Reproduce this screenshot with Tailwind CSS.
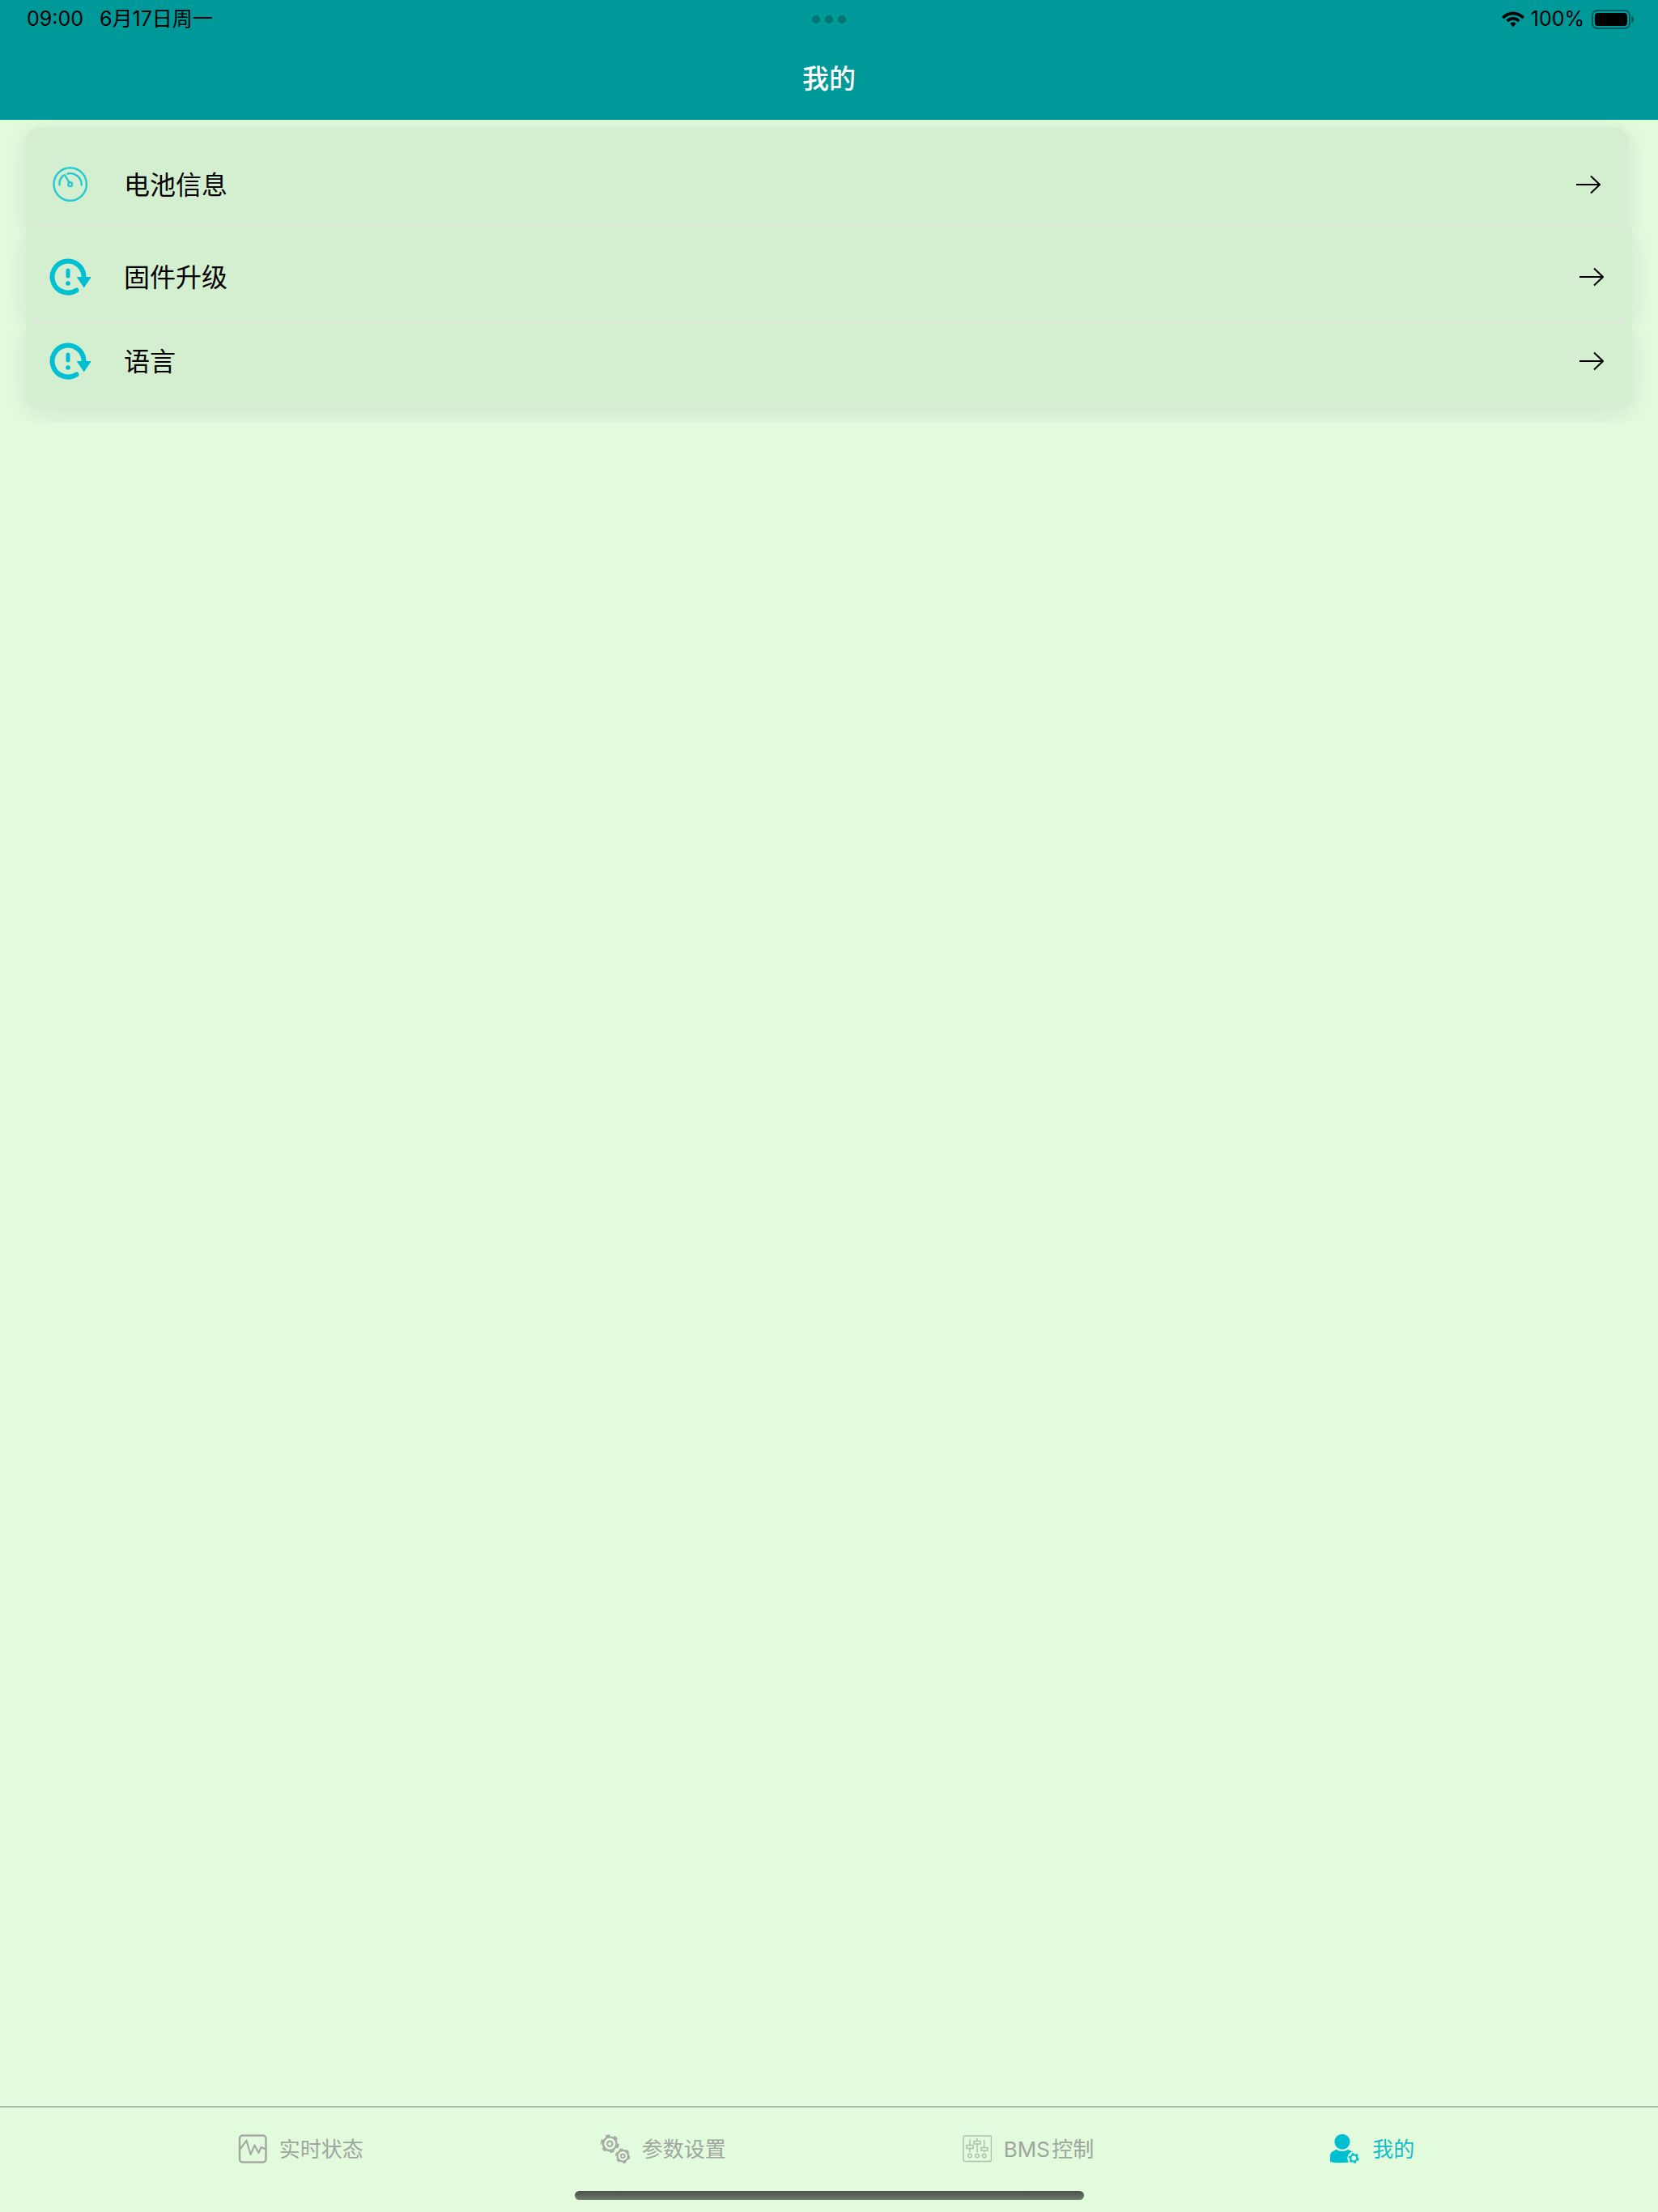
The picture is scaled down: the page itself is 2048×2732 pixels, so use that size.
<!DOCTYPE html>
<html lang="zh">
<head>
<meta charset="utf-8">
<title>我的</title>
<script src="https://cdn.jsdelivr.net/npm/@tailwindcss/browser@4"></script>
</head>
<body class="m-0">
<div class="w-[2048px] h-[2732px] flex flex-col overflow-hidden bg-[#e2fbdd] font-['Inter','Noto_Sans_CJK_SC',sans-serif]">
  <header class="h-[148px] bg-[#009999] flex flex-col shrink-0">
    <div class="h-[46px] flex items-center pl-[33px] pr-[30px] pt-[1px] text-[25px] leading-none text-black">
      <span>09:00</span>
      <span class="ml-[20px]">6月17日周一</span>
      <div class="flex-1 flex justify-center gap-[6px] pr-[70px]">
        <span class="w-[10px] h-[10px] rounded-full bg-black/25"></span>
        <span class="w-[10px] h-[10px] rounded-full bg-black/25"></span>
        <span class="w-[10px] h-[10px] rounded-full bg-black/25"></span>
      </div>
      <svg class="w-[28px] h-[20px]" viewBox="1.500 2.500 25 17" preserveAspectRatio="none"><path d="M14 3C9 3 5 5 1.500 8.300L3.700 10.500C6.500 7.800 10 6.300 14 6.300S21.500 7.800 24.300 10.500L26.500 8.300C23 5 19 3 14 3Z" fill="#000"/><path d="M14 8.500C11 8.500 8.300 9.700 6.300 11.600L8.500 13.800C10 12.500 11.900 11.700 14 11.700S18 12.500 19.500 13.800L21.700 11.600C19.700 9.700 17 8.500 14 8.500Z" fill="#000"/><path d="M14 14C12.800 14 11.600 14.500 10.800 15.200L14 19L17.200 15.200C16.400 14.500 15.200 14 14 14Z" fill="#000"/></svg>
      <span class="ml-[8px]">100%</span>
      <div class="ml-[9px] flex items-center">
        <div class="w-[48px] h-[24px] rounded-[7px] border-2 border-black/40 p-[2px]"><div class="w-full h-full rounded-[4px] bg-black"></div></div>
        <div class="ml-[1px] w-[3px] h-[8px] rounded-r-full bg-black/40"></div>
      </div>
    </div>
    <h1 class="flex-1 flex items-center justify-center text-[33px] font-medium text-white leading-none">我的</h1>
  </header>

  <main class="flex-1 flex flex-col font-['Noto_Sans_CJK_SC',sans-serif] text-[32px] text-black">
    <div class="h-[134px] overflow-hidden pt-[10px] pl-[32px] pr-[36px]">
      <div class="h-[134px] bg-[#d4efd0] rounded-t-[16px] shadow-[0_4px_30px_rgba(0,0,0,0.09)]">
        <div class="h-[118px] pt-[22px] flex items-center pl-[28px] pr-[35px]">
          <svg class="w-[52px] h-[50px]" viewBox="10 13 52 50" fill="none" stroke="#28c8d4"><circle cx="36.700" cy="37.500" r="20.200" stroke-width="2.400"/><path d="M23.500 38.500A13.500 13.500 0 0 1 28 27M33.500 24.500A14 14 0 0 1 50.700 38.500" stroke-width="2.400" stroke-linecap="round"/><path d="M30 26L35.500 35.500" stroke-width="2.400" stroke-linecap="round"/><circle cx="36.700" cy="37.700" r="2.500" stroke-width="2.200"/></svg>
          <span class="ml-[41px] flex-1 leading-none pb-[5px]">电池信息</span>
          <svg class="w-[30px] h-[24px]" viewBox="0 0 30 24" fill="none" stroke="#000" stroke-width="2"><path d="M0 12H29M18 1.500L29 12L18 22.500"/></svg>
        </div>
        <div class="h-[2px] mx-[8px] bg-[#e3e6df]"></div>
      </div>
    </div>
    <div class="h-[120px] overflow-hidden px-[32px]">
      <div class="h-[120px] bg-[#d4efd0] shadow-[0_4px_30px_rgba(0,0,0,0.09)]">
        <div class="h-[114px] pt-[6px] flex items-center pl-[28px] pr-[35px]">
          <svg class="w-[52px] h-[50px]" viewBox="10 12 52 50" fill="#00bfd3"><path d="M44.500 53.500A19.500 19.500 0 1 1 53.500 36" fill="none" stroke="#00bfd3" stroke-width="6" stroke-linecap="round"/><path d="M44.500 37H62.800L53.700 50.500Z"/><rect x="31.500" y="26.500" width="5" height="12" rx="2.500"/><circle cx="34" cy="45" r="2.800"/></svg>
          <span class="ml-[41px] flex-1 leading-none pb-[5px]">固件升级</span>
          <svg class="w-[30px] h-[24px]" viewBox="0 0 30 24" fill="none" stroke="#000" stroke-width="2"><path d="M0 12H29M18 1.500L29 12L18 22.500"/></svg>
        </div>
        <div class="h-[2px] ml-[8px] mr-[9px] bg-[#e3e6df]"></div>
      </div>
    </div>
    <div class="h-[120px] overflow-hidden px-[32px]">
      <div class="h-[104px] bg-[#d4efd0] rounded-b-[16px] shadow-[0_4px_30px_rgba(0,0,0,0.09)]">
        <div class="h-[88px] flex items-center pl-[28px] pr-[35px]">
          <svg class="w-[52px] h-[50px]" viewBox="10 12 52 50" fill="#00bfd3"><path d="M44.500 53.500A19.500 19.500 0 1 1 53.500 36" fill="none" stroke="#00bfd3" stroke-width="6" stroke-linecap="round"/><path d="M44.500 37H62.800L53.700 50.500Z"/><rect x="31.500" y="26.500" width="5" height="12" rx="2.500"/><circle cx="34" cy="45" r="2.800"/></svg>
          <span class="ml-[41px] flex-1 leading-none pb-[5px]">语言</span>
          <svg class="w-[30px] h-[24px]" viewBox="0 0 30 24" fill="none" stroke="#000" stroke-width="2"><path d="M0 12H29M18 1.500L29 12L18 22.500"/></svg>
        </div>
      </div>
    </div>
  </main>

  <footer class="h-[131px] shrink-0 border-t-2 border-[#a9bca6] flex flex-col font-['Inter','Noto_Sans_CJK_SC',sans-serif] text-[26px] leading-none text-[#a0a59f]">
    <nav class="h-[103px] flex items-center justify-center gap-[292px] pb-[2px] pr-[7px]">
      <a class="flex items-center gap-[15px]">
        <svg class="w-[36px] h-[36px]" viewBox="13 15 36 36" fill="none" stroke="#a5aba4" stroke-width="2.500"><rect x="15" y="16.500" width="32.500" height="33" rx="3.500"/><path d="M15.500 33.500L23.500 22.700L28.500 40L33.500 28.500L38.500 38L41.500 31L47.500 33.500" stroke-width="2.200" stroke-linejoin="round"/></svg>
        <span class="pt-[2px]">实时状态</span>
      </a>
      <a class="flex items-center gap-[15px]">
        <svg class="w-[37px] h-[38px]" viewBox="11 9 37 38" fill="none" stroke="#a5aba4"><circle cx="23.300" cy="21.700" r="8.300" stroke-width="2.400"/><circle cx="23.300" cy="21.700" r="10" stroke-width="2.800" pathLength="6" stroke-dasharray="0.5 0.5"/><circle cx="23.300" cy="21.700" r="3.200" stroke-width="2"/><circle cx="39.300" cy="36.700" r="6.800" stroke-width="2.200"/><circle cx="39.300" cy="36.700" r="8" stroke-width="2.500" pathLength="6" stroke-dasharray="0.5 0.5"/><circle cx="39.300" cy="36.700" r="2.400" stroke-width="1.800"/></svg>
        <span class="pt-[2px]">参数设置</span>
      </a>
      <a class="flex items-center gap-[15px]">
        <svg class="w-[36px] h-[34px]" viewBox="8 11.500 36 34" fill="none" stroke="#b3bfae" stroke-width="1.500"><rect x="9" y="12.500" width="34.500" height="31.500" rx="2"/><path d="M17 17V33M26 15.500V33M34.700 17V33" /><rect x="13" y="24" width="8" height="4" fill="#e2fbdd"/><rect x="22" y="19" width="8" height="3.500" fill="#e2fbdd"/><rect x="31" y="27" width="8" height="3.500" fill="#e2fbdd"/><circle cx="17" cy="37" r="2.300"/><circle cx="26" cy="37" r="2.300"/><circle cx="34.700" cy="37" r="2.300"/></svg>
        <span class="pt-[2px] [word-spacing:-5px]">BMS 控制</span>
      </a>
      <a class="flex items-center gap-[16px] text-[#14bccb]">
        <svg class="w-[36px] h-[37px]" viewBox="10 9 36 37" fill="#00bfd0"><circle cx="25" cy="19.300" r="9.500"/><path d="M10 44V37C10 33 13 30.500 18 29C22 31.500 28 31.500 32 29C36 30 39 32 40 37V43C31 45.500 18 46 10 44Z"/><circle cx="39.300" cy="39.500" r="8" fill="#e2fbdd"/><circle cx="39.300" cy="39.500" r="4" fill="none" stroke="#00bfd0" stroke-width="2.200"/><circle cx="39.300" cy="39.500" r="5.500" fill="none" stroke="#00bfd0" stroke-width="2" pathLength="6" stroke-dasharray="0.5 0.5"/></svg>
        <span class="pt-[2px]">我的</span>
      </a>
    </nav>
    <div class="w-[629px] h-[11px] mx-auto rounded-full bg-linear-to-b from-[#4a524a] to-[#6f7b6e]"></div>
  </footer>
</div>
</body>
</html>
